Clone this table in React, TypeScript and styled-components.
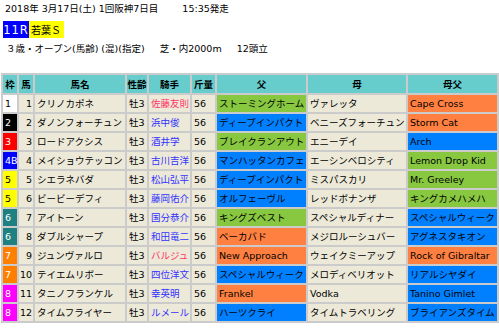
import * as React from 'react';
import styled, { createGlobalStyle } from 'styled-components';

type Tone = 'green' | 'blue' | 'orange' | 'plain';

interface Runner {
    waku: string;
    num: number;
    name: string;
    jockey: string;
    foreign?: boolean;
    sire: string;
    sireTone: Tone;
    dam: string;
    damSire: string;
    damSireTone: Tone;
}

const runners: Runner[] = [
    { waku: '1', num: 1, name: 'クリノカポネ', jockey: '佐藤友則', foreign: true, sire: 'ストーミングホーム', sireTone: 'green', dam: 'ヴァレッタ', damSire: 'Cape Cross', damSireTone: 'orange' },
    { waku: '2', num: 2, name: 'ダノンフォーチュン', jockey: '浜中俊', sire: 'ディープインパクト', sireTone: 'blue', dam: 'ベニーズフォーチュン', damSire: 'Storm Cat', damSireTone: 'orange' },
    { waku: '3', num: 3, name: 'ロードアクシス', jockey: '酒井学', sire: 'ブレイクランアウト', sireTone: 'green', dam: 'エニーデイ', damSire: 'Arch', damSireTone: 'blue' },
    { waku: '4B', num: 4, name: 'メイショウテッコン', jockey: '古川吉洋', sire: 'マンハッタンカフェ', sireTone: 'blue', dam: 'エーシンベロシティ', damSire: 'Lemon Drop Kid', damSireTone: 'green' },
    { waku: '5', num: 5, name: 'シエラネバダ', jockey: '松山弘平', sire: 'ディープインパクト', sireTone: 'blue', dam: 'ミスパスカリ', damSire: 'Mr. Greeley', damSireTone: 'green' },
    { waku: '5', num: 6, name: 'ビービーデフィ', jockey: '藤岡佑介', sire: 'オルフェーヴル', sireTone: 'blue', dam: 'レッドボナンザ', damSire: 'キングカメハメハ', damSireTone: 'green' },
    { waku: '6', num: 7, name: 'アイトーン', jockey: '国分恭介', sire: 'キングズベスト', sireTone: 'green', dam: 'スペシャルディナー', damSire: 'スペシャルウィーク', damSireTone: 'blue' },
    { waku: '6', num: 8, name: 'ダブルシャープ', jockey: '和田竜二', sire: 'ベーカバド', sireTone: 'orange', dam: 'メジロルーシュバー', damSire: 'アグネスタキオン', damSireTone: 'blue' },
    { waku: '7', num: 9, name: 'ジュンヴァルロ', jockey: 'バルジュ', foreign: true, sire: 'New Approach', sireTone: 'orange', dam: 'ウェイクミーアップ', damSire: 'Rock of Gibraltar', damSireTone: 'orange' },
    { waku: '7', num: 10, name: 'テイエムリボー', jockey: '四位洋文', sire: 'スペシャルウィーク', sireTone: 'blue', dam: 'メロディベリオット', damSire: 'リアルシヤダイ', damSireTone: 'blue' },
    { waku: '8', num: 11, name: 'タニノフランケル', jockey: '幸英明', sire: 'Frankel', sireTone: 'orange', dam: 'Vodka', damSire: 'Tanino Gimlet', damSireTone: 'blue' },
    { waku: '8', num: 12, name: 'タイムフライヤー', jockey: 'ルメール', sire: 'ハーツクライ', sireTone: 'blue', dam: 'タイムトラベリング', damSire: 'ブライアンズタイム', damSireTone: 'blue' },
];

const wakuColors: Record<string, { bg: string; fg: string }> = {
    '1': { bg: '#ffffff', fg: '#000' },
    '2': { bg: '#000000', fg: '#fff' },
    '3': { bg: '#ff0000', fg: '#fff' },
    '4': { bg: '#0000ff', fg: '#fff' },
    '5': { bg: '#ffff00', fg: '#000' },
    '6': { bg: '#1e8080', fg: '#fff' },
    '7': { bg: '#ff8000', fg: '#fff' },
    '8': { bg: '#ff00ff', fg: '#fff' },
};

const toneColors: Record<Tone, string> = {
    green: '#88c840',
    blue: '#0080ff',
    orange: '#ff8040',
    plain: '#ece9d8',
};

const colWidths = [14, 14, 90, 20, 41, 23, 89, 98, 89];
const headers = ['枠', '馬', '馬名', '性齢', '騎手', '斤量', '父', '母', '母父'];

export default function App() {
    return (
        <Page>
            <GlobalStyle />
            <DateLine>
                2018年 3月17日(土) 1回阪神7日目
                <StartTime>15:35発走</StartTime>
            </DateLine>
            <TitleRow>
                <RaceNo>11R</RaceNo>
                <RaceName>若葉Ｓ</RaceName>
            </TitleRow>
            <Conditions>
                ３歳・オープン(馬齢) (混)(指定)
                <Spaced>芝・内2000m</Spaced>
                <Spaced>12頭立</Spaced>
            </Conditions>
            <Table>
                <colgroup>
                    {colWidths.map((w, i) => (
                        <col key={i} style={{ width: w }} />
                    ))}
                </colgroup>
                <thead>
                    <tr>
                        {headers.map((h) => (
                            <HeadCell key={h}>{h}</HeadCell>
                        ))}
                    </tr>
                </thead>
                <tbody>
                    {runners.map((r) => {
                        const waku = wakuColors[r.waku.charAt(0)];
                        return (
                            <tr key={r.num}>
                                <WakuCell $bg={waku.bg} $fg={waku.fg}>{r.waku}</WakuCell>
                                <NumCell>{r.num}</NumCell>
                                <Cell>{r.name}</Cell>
                                <Cell>牡3</Cell>
                                <JockeyCell $foreign={r.foreign}>{r.jockey}</JockeyCell>
                                <Cell>56</Cell>
                                <Cell $tone={r.sireTone}>{r.sire}</Cell>
                                <Cell>{r.dam}</Cell>
                                <Cell $tone={r.damSireTone}>{r.damSire}</Cell>
                            </tr>
                        );
                    })}
                </tbody>
            </Table>
        </Page>
    );
}

const GlobalStyle = createGlobalStyle`
    body {
        margin: 0;
        background: #fff;
        font-family: "DejaVu Sans", "Noto Sans CJK JP", sans-serif;
        color: #000;
    }
`;

const Page = styled.div`
    width: 499px;
    padding-top: 2px;
    font-size: 9.5px;
`;

const DateLine = styled.div`
    padding-left: 5px;
    line-height: 14px;
    white-space: nowrap;
`;

const StartTime = styled.span`
    margin-left: 24px;
`;

const TitleRow = styled.div`
    display: flex;
    margin: 5px 0 0 3px;
    height: 17px;
`;

const RaceNo = styled.div`
    display: flex;
    align-items: center;
    justify-content: center;
    width: 26px;
    background: #0000ff;
    color: #fff;
    font-size: 11.5px;
    letter-spacing: 1px;
`;

const RaceName = styled.div`
    display: flex;
    align-items: center;
    padding: 0 3px 0 2px;
    background: #ffff00;
    font-size: 10px;
    white-space: nowrap;
`;

const Conditions = styled.div`
    margin-top: 4px;
    padding-left: 6px;
    line-height: 14px;
    white-space: nowrap;
`;

const Spaced = styled.span`
    margin-left: 15px;
`;

const Table = styled.table`
    margin: 17px 0 0 1px;
    width: 498px;
    table-layout: fixed;
    border-collapse: separate;
    border-spacing: 2px 2.4px;
    background: #cbcbcb;
    font-size: 9.5px;
`;

const HeadCell = styled.th`
    height: 18px;
    padding: 0;
    background: #66cccc;
    font-weight: bold;
    text-align: center;
    white-space: nowrap;
    overflow: hidden;
`;

const Cell = styled.td<{ $tone?: Tone }>`
    height: 17px;
    padding: 0 0 0 2px;
    background: ${(p) => toneColors[p.$tone ?? 'plain']};
    white-space: nowrap;
    overflow: hidden;
    line-height: 17px;
`;

const WakuCell = styled(Cell)<{ $bg: string; $fg: string }>`
    background: ${(p) => p.$bg};
    color: ${(p) => p.$fg};
`;

const NumCell = styled(Cell)`
    text-align: right;
    padding: 0 1px 0 0;
`;

const JockeyCell = styled(Cell)<{ $foreign?: boolean }>`
    color: ${(p) => (p.$foreign ? '#ff3366' : '#3333ff')};
`;
